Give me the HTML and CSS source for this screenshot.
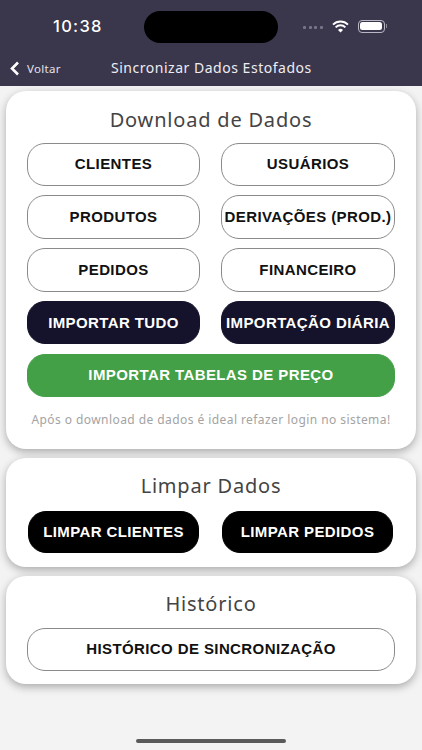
FILE: index.html
```html
<!DOCTYPE html>
<html lang="pt-BR">
<head>
  <meta charset="UTF-8" />
  <meta name="viewport" content="width=device-width, initial-scale=1.0"/>
  <title>Sincronizar Dados Estofados</title>
  <link rel="stylesheet" href="styles.css">
</head>
<body>
  <div class="topbar">
    <div class="status">
      <span class="time">10:38</span>
      <div class="island"></div>
      <div class="status-icons">
        <span class="signal"><i></i><i></i><i></i><i></i></span>
        <svg class="wifi" width="17" height="13" viewBox="0 0 17 13">
          <path d="M1 4.6a10.6 10.6 0 0 1 15 0" fill="none" stroke="#fff" stroke-width="1.9"/>
          <path d="M3.6 7.3a6.9 6.9 0 0 1 9.8 0" fill="none" stroke="#fff" stroke-width="1.9"/>
          <path d="M6 9.9a3.4 3.4 0 0 1 5 0L8.5 12.4z" fill="#fff"/>
        </svg>
        <span class="battery"><span class="battery-fill"></span></span>
        <span class="battery-tip"></span>
      </div>
    </div>
    <div class="nav">
      <div class="back">
        <svg width="11" height="15" viewBox="0 0 11 15">
          <path d="M9 1.5 3 7.5l6 6" fill="none" stroke="#fff" stroke-width="2.6"/>
        </svg>
        <span>Voltar</span>
      </div>
      <div class="nav-title">Sincronizar Dados Estofados</div>
    </div>
  </div>

  <div class="content">
    <div class="card">
      <div class="card-title">Download de Dados</div>
      <div class="grid">
        <button class="btn">CLIENTES</button>
        <button class="btn">USUÁRIOS</button>
        <button class="btn">PRODUTOS</button>
        <button class="btn">DERIVAÇÕES (PROD.)</button>
        <button class="btn">PEDIDOS</button>
        <button class="btn">FINANCEIRO</button>
        <button class="btn btn-dark">IMPORTAR TUDO</button>
        <button class="btn btn-dark">IMPORTAÇÃO DIÁRIA</button>
        <button class="btn btn-green wide">IMPORTAR TABELAS DE PREÇO</button>
      </div>
      <p class="hint">Após o download de dados é ideal refazer login no sistema!</p>
    </div>

    <div class="card">
      <div class="card-title">Limpar Dados</div>
      <div class="grid grid-black">
        <button class="btn btn-black">LIMPAR CLIENTES</button>
        <button class="btn btn-black">LIMPAR PEDIDOS</button>
      </div>
    </div>

    <div class="card">
      <div class="card-title">Histórico</div>
      <div class="grid">
        <button class="btn wide">HISTÓRICO DE SINCRONIZAÇÃO</button>
      </div>
    </div>
  </div>

  <div class="home-bar"></div>
</body>
</html>
```

FILE: styles.css
```css
* {
  box-sizing: border-box;
}

body {
  margin: 0;
  width: 422px;
  height: 750px;
  overflow: hidden;
  background: #f3f3f4;
  font-family: 'Noto Sans', sans-serif;
  display: flex;
  flex-direction: column;
}

.topbar {
  height: 86px;
  background: #3a364c;
  color: white;
}

.status {
  height: 52px;
  padding: 11px 0 0 53px;
  display: flex;
  align-items: flex-start;
}

.time {
  width: 91px;
  font-family: 'Inter', sans-serif;
  font-size: 16.5px;
  font-weight: 500;
  line-height: 30px;
  letter-spacing: 1.3px;
}

.island {
  width: 134px;
  height: 32px;
  background: black;
  border-radius: 16px;
  flex-shrink: 0;
}

.status-icons {
  margin-left: 25px;
  height: 30px;
  display: flex;
  align-items: center;
}

.signal {
  display: flex;
  gap: 2.5px;
  margin-right: 9px;
  margin-top: 3px;
}

.signal i {
  width: 3px;
  height: 3px;
  background: #77748a;
  border-radius: 1px;
}

.wifi {
  margin-right: 9px;
}

.battery {
  width: 27px;
  height: 13px;
  border: 1px solid #b9b7c4;
  border-radius: 4px;
  padding: 1.5px;
  display: flex;
}

.battery-fill {
  flex: 1;
  background: white;
  border-radius: 2.5px;
}

.battery-tip {
  width: 1.5px;
  height: 4px;
  background: #8e8b9d;
  margin-left: 1px;
}

.nav {
  height: 34px;
  padding-left: 9px;
  display: flex;
  align-items: flex-start;
}

.back {
  width: 102px;
  height: 32px;
  display: flex;
  align-items: center;
  gap: 7px;
  font-size: 11.5px;
  letter-spacing: 0.3px;
  color: #e4e3ea;
}

.nav-title {
  font-size: 14px;
  line-height: 32px;
  letter-spacing: 0.52px;
  color: #eeedf2;
}

.content {
  flex: 1;
  padding: 5px 6px 0;
  display: flex;
  flex-direction: column;
  gap: 9px;
}

.card {
  background: white;
  border-radius: 20px;
  padding: 14.5px 21px 13px;
  box-shadow: 0 3px 8px rgba(0, 0, 0, 0.3);
}

.card-title {
  font-size: 20px;
  line-height: 27px;
  text-align: center;
  letter-spacing: 0.8px;
  color: #444;
  margin-bottom: 10.2px;
}

.grid {
  display: grid;
  grid-template-columns: 173px 174px;
  column-gap: 21px;
  row-gap: 9.25px;
}

.btn {
  height: 43.5px;
  padding: 0 0 1px;
  background: white;
  border: 1px solid #8a8a8a;
  border-radius: 18px;
  font-family: 'Liberation Sans', sans-serif;
  font-size: 15px;
  font-weight: bold;
  letter-spacing: 0.4px;
  color: #111;
  white-space: nowrap;
}

.btn-dark {
  background: #15132b;
  border-color: #15132b;
  color: white;
}

.btn-black {
  background: black;
  border-color: black;
  color: white;
  height: 42px;
}

.btn-green {
  background: #43a047;
  border-color: #43a047;
  color: white;
}

.wide {
  grid-column: 1 / 3;
}

.grid-black {
  padding: 1.3px 1px 1px;
  grid-template-columns: 171px 171px;
  column-gap: 23px;
}

.hint {
  margin: 14.3px 0 6.5px;
  font-size: 12px;
  line-height: 18px;
  text-align: center;
  letter-spacing: 0.43px;
  color: #a3a3a3;
  white-space: nowrap;
}

.home-bar {
  width: 150px;
  height: 4px;
  margin: 0 auto 7px;
  background: #5a5a5a;
  border-radius: 2px;
}
```
